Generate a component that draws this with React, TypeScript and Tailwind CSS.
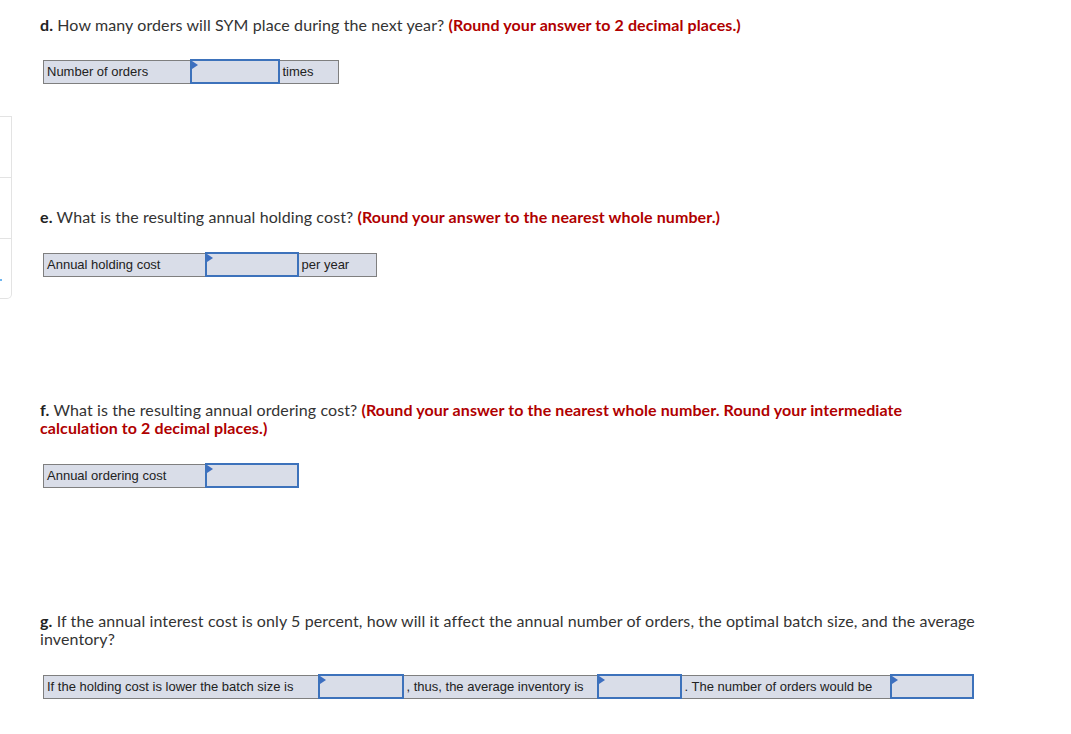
import React from 'react';

const headingFont = { fontFamily: '"Lato", "Open Sans", sans-serif' };

function Marker() {
  return (
    <span className="absolute left-0 top-0 h-0 w-0 border-y-[4px] border-l-[6px] border-y-transparent border-l-[#3d6fc0]" />
  );
}

function LabelCell({ text, width }: { text: string; width: string }) {
  return (
    <td className={`${width} h-[23px] border border-[#7f7f7f] bg-[#d9dde8] px-[3px] py-0 text-[13px] leading-none text-[#222]`}>
      {text}
    </td>
  );
}

function InputCell({ width }: { width: string }) {
  return (
    <td className={`${width} relative h-[23px] border-2 border-[#3d72bb] bg-[#d9dde8] p-0`}>
      <Marker />
    </td>
  );
}

function Heading({ letter, children }: { letter: string; children: React.ReactNode }) {
  return (
    <p className="text-[16px] leading-[18px] tracking-[0.1px] text-[#333]" style={headingFont}>
      <span className="font-bold text-[#222]">{letter}.</span> {children}
    </p>
  );
}

function Red({ children }: { children: React.ReactNode }) {
  return <span className="font-bold text-[#b00000]">{children}</span>;
}

export default function App() {
  return (
    <div className="relative min-h-[734px] w-[1071px] bg-white" style={{ fontFamily: '"Liberation Sans", Arial, sans-serif' }}>
      {/* side tab peeking in from the left */}
      <div className="absolute left-0 top-[116px] flex h-[183px] w-[12px] flex-col rounded-br-[5px] border border-l-0 border-[#e3e3e3] bg-white">
        <div className="h-[61px] border-b border-[#e3e3e3]" />
        <div className="h-[61px] border-b border-[#e3e3e3]" />
        <div className="relative flex-1">
          <span className="absolute left-0 top-[40px] h-[2px] w-[2px] bg-[#6fb6f0]" />
        </div>
      </div>

      <div className="pl-[40px] pt-[16px]">
        <Heading letter="d">
          How many orders will SYM place during the next year? <Red>(Round your answer to 2 decimal places.)</Red>
        </Heading>
        <table className="ml-[3px] mt-[25px] border-collapse">
          <tbody>
            <tr>
              <LabelCell text="Number of orders" width="w-[147px]" />
              <InputCell width="w-[88px]" />
              <LabelCell text="times" width="w-[60px]" />
            </tr>
          </tbody>
        </table>

        <div className="mt-[124px]">
          <Heading letter="e">
            What is the resulting annual holding cost? <Red>(Round your answer to the nearest whole number.)</Red>
          </Heading>
        </div>
        <table className="ml-[3px] mt-[26px] border-collapse">
          <tbody>
            <tr>
              <LabelCell text="Annual holding cost" width="w-[162px]" />
              <InputCell width="w-[92px]" />
              <LabelCell text="per year" width="w-[79px]" />
            </tr>
          </tbody>
        </table>

        <div className="mt-[124px] w-[870px]">
          <Heading letter="f">
            What is the resulting annual ordering cost?{' '}
            <Red>(Round your answer to the nearest whole number. Round your intermediate calculation to 2 decimal places.)</Red>
          </Heading>
        </div>
        <table className="ml-[3px] mt-[26px] border-collapse">
          <tbody>
            <tr>
              <LabelCell text="Annual ordering cost" width="w-[162px]" />
              <InputCell width="w-[92px]" />
            </tr>
          </tbody>
        </table>

        <div className="mt-[124px] w-[945px]">
          <Heading letter="g">
            If the annual interest cost is only 5 percent, how will it affect the annual number of orders, the optimal batch size, and the average inventory?
          </Heading>
        </div>
        <table className="ml-[3px] mt-[26px] border-collapse">
          <tbody>
            <tr>
              <LabelCell text="If the holding cost is lower the batch size is" width="w-[275px]" />
              <InputCell width="w-[84px]" />
              <LabelCell text=", thus, the average inventory is" width="w-[195px]" />
              <InputCell width="w-[83px]" />
              <LabelCell text=". The number of orders would be" width="w-[210px]" />
              <InputCell width="w-[82px]" />
            </tr>
          </tbody>
        </table>
      </div>
    </div>
  );
}
